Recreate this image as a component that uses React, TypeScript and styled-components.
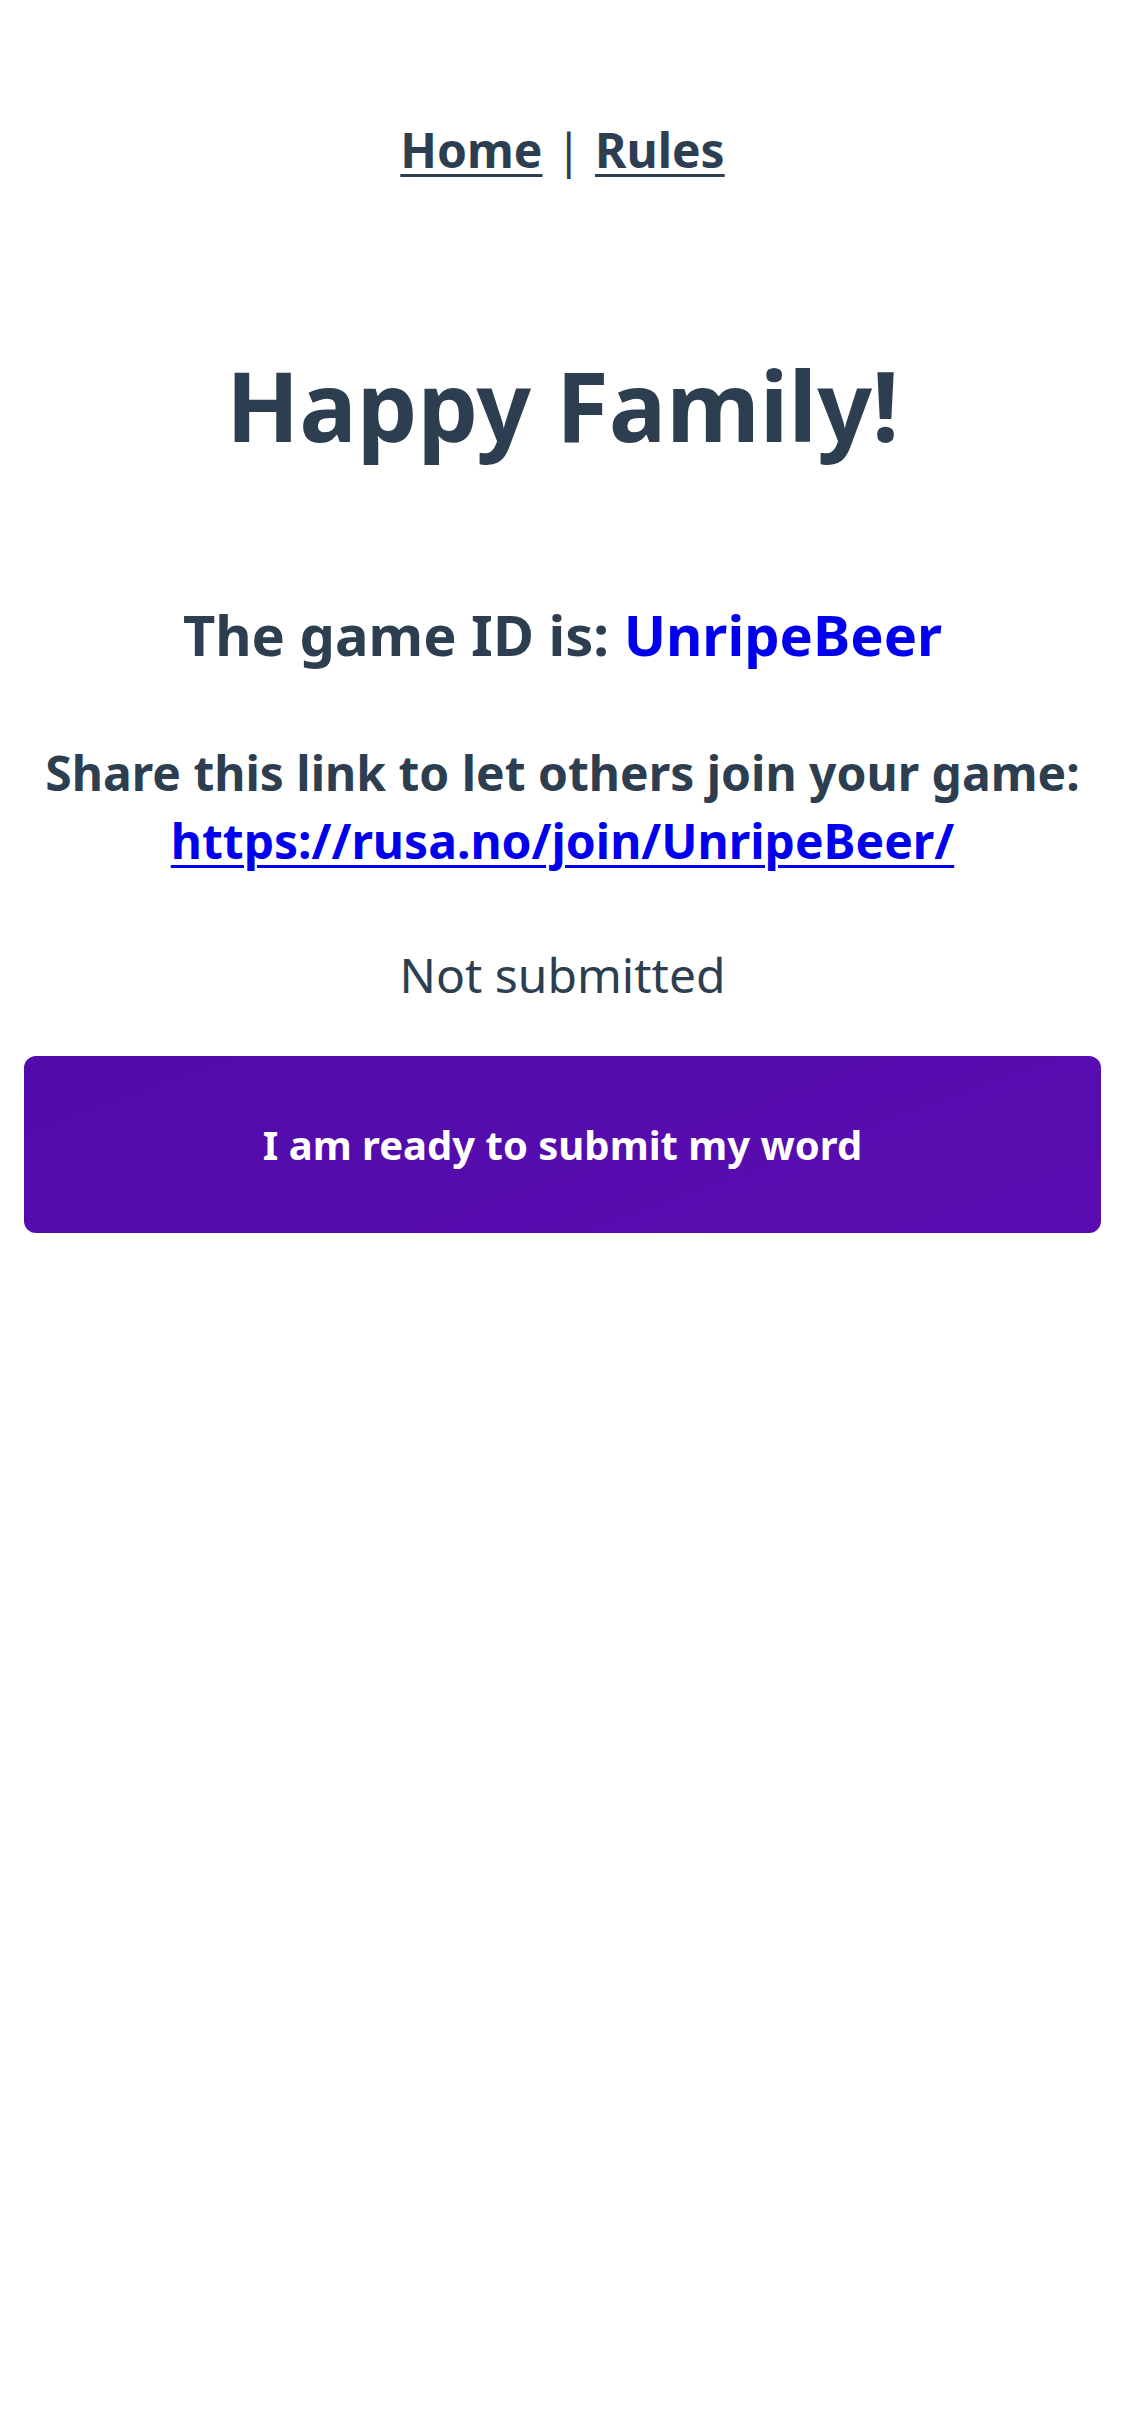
import React from "react";
import styled, { createGlobalStyle } from "styled-components";

const GlobalStyle = createGlobalStyle`
  html, body {
    margin: 0;
    padding: 0;
    background: #ffffff;
  }
  body {
    font-family: "Noto Sans", "Open Sans", sans-serif;
    color: #2c3e50;
    -webkit-font-smoothing: antialiased;
  }
`;

const Page = styled.div`
  display: flex;
  flex-direction: column;
  align-items: center;
  padding: 117px 24px 0;
  text-align: center;
`;

const Nav = styled.nav`
  display: flex;
  align-items: center;
  gap: 13px;
  font-size: 48px;
  font-weight: 700;
  line-height: normal;
`;

const NavLink = styled.a`
  color: #2c3e50;
  text-decoration: underline;
  text-decoration-thickness: 3px;
  text-underline-offset: 6px;
`;

const Separator = styled.span`
  font-weight: 400;
`;

const Title = styled.h1`
  margin: 157px 0 0;
  font-size: 96px;
  font-weight: 700;
  line-height: normal;
`;

const GameId = styled.h3`
  margin: 126px 0 0;
  font-size: 56px;
  font-weight: 700;
  line-height: normal;
`;

const Highlight = styled.span`
  color: #0000ee;
`;

const Share = styled.h4`
  margin: 67px 0 0;
  font-size: 48px;
  font-weight: 700;
  line-height: 68px;
`;

const ShareLink = styled.a`
  color: #0000ee;
  text-decoration: underline;
  text-decoration-thickness: 3px;
  text-underline-offset: 6px;
`;

const Status = styled.p`
  margin: 67px 0 0;
  font-size: 48px;
  font-weight: 400;
  line-height: normal;
`;

const SubmitButton = styled.button`
  margin-top: 49px;
  align-self: stretch;
  height: 177px;
  border: none;
  border-radius: 12px;
  background: linear-gradient(160deg, #520bab 0%, #590db0 100%);
  color: #ffffff;
  font-family: "Noto Sans", "Open Sans", sans-serif;
  font-size: 40px;
  font-weight: 700;
  cursor: pointer;
`;

export default function App() {
  return (
    <>
      <GlobalStyle />
      <Page>
        <Nav>
          <NavLink href="#">Home</NavLink>
          <Separator>|</Separator>
          <NavLink href="#">Rules</NavLink>
        </Nav>
        <Title>Happy Family!</Title>
        <GameId>
          The game ID is: <Highlight>UnripeBeer</Highlight>
        </GameId>
        <Share>
          Share this link to let others join your game:
          <br />
          <ShareLink href="#">https://rusa.no/join/UnripeBeer/</ShareLink>
        </Share>
        <Status>Not submitted</Status>
        <SubmitButton>I am ready to submit my word</SubmitButton>
      </Page>
    </>
  );
}
